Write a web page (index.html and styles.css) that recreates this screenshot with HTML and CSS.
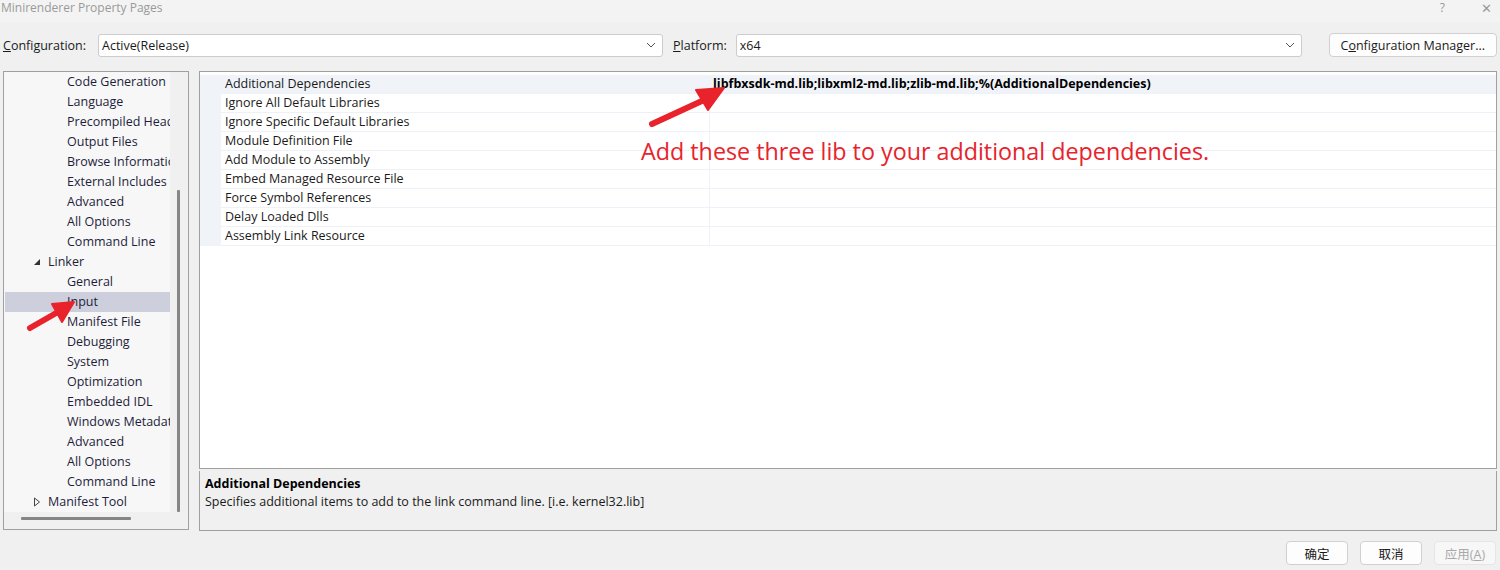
FILE: index.html
```html
<!DOCTYPE html>
<html>
<head>
<meta charset="utf-8">
<link rel="stylesheet" href="styles.css">
</head>
<body>
<div class="win">
  <div class="titlebar">
    <span class="title">Minirenderer Property Pages</span>
    <span class="tb-btns"><span class="help">?</span><span class="close">✕</span></span>
  </div>
  <div class="config-row">
    <span class="lbl"><u>C</u>onfiguration:</span>
    <div class="select sel-config"><span>Active(Release)</span><svg class="chev" width="10" height="6" viewBox="0 0 10 6"><path d="M1 1 L5 5 L9 1" fill="none" stroke="#555" stroke-width="1"/></svg></div>
    <span class="lbl lbl-plat"><u>P</u>latform:</span>
    <div class="select sel-plat"><span>x64</span><svg class="chev" width="10" height="6" viewBox="0 0 10 6"><path d="M1 1 L5 5 L9 1" fill="none" stroke="#555" stroke-width="1"/></svg></div>
    <button class="btn cfg-mgr">C<u>o</u>nfiguration Manager...</button>
  </div>
  <div class="main">
    <div class="tree-box">
      <div class="tree-inner">
        <div class="tree">
          <div class="ti l2">Code Generation</div>
          <div class="ti l2">Language</div>
          <div class="ti l2">Precompiled Headers</div>
          <div class="ti l2">Output Files</div>
          <div class="ti l2">Browse Information</div>
          <div class="ti l2">External Includes</div>
          <div class="ti l2">Advanced</div>
          <div class="ti l2">All Options</div>
          <div class="ti l2">Command Line</div>
          <div class="ti l1"><svg class="tw" width="8" height="8" viewBox="0 0 8 8"><path d="M7 1 L7 7 L1 7 Z" fill="#333"/></svg>Linker</div>
          <div class="ti l2">General</div>
          <div class="ti l2 sel">Input</div>
          <div class="ti l2">Manifest File</div>
          <div class="ti l2">Debugging</div>
          <div class="ti l2">System</div>
          <div class="ti l2">Optimization</div>
          <div class="ti l2">Embedded IDL</div>
          <div class="ti l2">Windows Metadata</div>
          <div class="ti l2">Advanced</div>
          <div class="ti l2">All Options</div>
          <div class="ti l2">Command Line</div>
          <div class="ti l1"><svg class="tw" width="8" height="10" viewBox="0 0 8 10"><path d="M1.5 1 L6.5 5 L1.5 9 Z" fill="none" stroke="#444" stroke-width="1"/></svg>Manifest Tool</div>
        </div>
        <div class="vscroll"><div class="vthumb"></div></div>
      </div>
      <div class="hscroll"><div class="hthumb"></div></div>
    </div>
    <div class="right">
      <div class="grid">
        <div class="row first"><div class="gut"></div><div class="name">Additional Dependencies</div><div class="val">libfbxsdk-md.lib;libxml2-md.lib;zlib-md.lib;%(AdditionalDependencies)</div></div>
        <div class="row"><div class="gut"></div><div class="name">Ignore All Default Libraries</div><div class="val"></div></div>
        <div class="row"><div class="gut"></div><div class="name">Ignore Specific Default Libraries</div><div class="val"></div></div>
        <div class="row"><div class="gut"></div><div class="name">Module Definition File</div><div class="val"></div></div>
        <div class="row"><div class="gut"></div><div class="name">Add Module to Assembly</div><div class="val"></div></div>
        <div class="row"><div class="gut"></div><div class="name">Embed Managed Resource File</div><div class="val"></div></div>
        <div class="row"><div class="gut"></div><div class="name">Force Symbol References</div><div class="val"></div></div>
        <div class="row"><div class="gut"></div><div class="name">Delay Loaded Dlls</div><div class="val"></div></div>
        <div class="row"><div class="gut"></div><div class="name">Assembly Link Resource</div><div class="val"></div></div>
        <div class="note">Add these three lib to your additional dependencies.</div>
      </div>
      <div class="desc">
        <div class="desc-title">Additional Dependencies</div>
        <div class="desc-text">Specifies additional items to add to the link command line. [i.e. kernel32.lib]</div>
      </div>
    </div>
  </div>
  <div class="footer">
    <button class="btn fbtn">确定</button>
    <button class="btn fbtn">取消</button>
    <button class="btn fbtn dis">应用(<u>A</u>)</button>
  </div>
  <svg class="arrow arrow1" width="100" height="60" viewBox="0 0 100 60">
    <path d="M8 48 L60 24" stroke="#e8232b" stroke-width="6" stroke-linecap="round"/>
    <path d="M80 12 L52 14 L64 34 Z" fill="#e8232b" stroke="#e8232b" stroke-width="2" stroke-linejoin="round"/>
  </svg>
  <svg class="arrow arrow2" width="60" height="40" viewBox="0 0 60 40">
    <path d="M6 34 L34 18" stroke="#e8232b" stroke-width="6" stroke-linecap="round"/>
    <path d="M50 8 L28 10 L38 28 Z" fill="#e8232b" stroke="#e8232b" stroke-width="2" stroke-linejoin="round"/>
  </svg>
</div>
</body>
</html>
```

FILE: styles.css
```css
* { box-sizing: border-box; }
html, body { margin: 0; padding: 0; }
body {
  width: 1500px; height: 570px; overflow: hidden;
  background: #f0f0f0;
  font-family: "Open Sans", "Noto Sans CJK SC", sans-serif;
  font-size: 12px;
  color: #1a1a1a;
}
.win { position: relative; width: 1500px; height: 570px; }
.titlebar {
  height: 22px; background: #f3f3f3;
  display: flex; justify-content: space-between; align-items: center;
}
.title { color: #9a9a9a; font-size: 12px; padding-left: 1px; margin-top: -7px; }
.tb-btns { display: flex; gap: 36px; color: #999; margin-top: -7px; padding-right: 8px; }
.help { font-size: 12px; }
.close { font-size: 13px; }
.config-row {
  display: flex; align-items: center;
  height: 24px; margin-top: 11px;
  padding-left: 3px;
}
.lbl { font-size: 12.5px; }
.select {
  height: 23px; background: #fff;
  border: 1px solid #ccc; border-radius: 3px;
  display: flex; align-items: center; justify-content: space-between;
  padding: 0 6px 0 3px; font-size: 12.5px;
}
.sel-config { width: 565px; margin-left: 12px; }
.lbl-plat { margin-left: 10px; }
.sel-plat { width: 566px; margin-left: 9px; }
.btn {
  font-family: "Open Sans", "Noto Sans CJK SC", sans-serif;
  background: #fdfdfd; border: 1px solid #d0d0d0; border-radius: 4px;
  font-size: 12.5px; color: #1a1a1a; padding: 0;
}
.cfg-mgr { margin-left: 27px; width: 168px; height: 24px; }
.main { display: flex; margin-top: 14px; padding-left: 3px; height: 460px; }
.tree-box {
  width: 186px; height: 459px; border: 1px solid #a0a0a0;
  display: flex; flex-direction: column;
}
.tree-inner { display: flex; height: 440px; }
.tree { width: 166px; background: #f7f7f7; overflow: hidden; padding-left: 1px; }
.ti { height: 20px; line-height: 20px; font-size: 12.5px; color: #1e1e3c; white-space: nowrap; }
.l2 { padding-left: 62px; }
.l1 { padding-left: 28px; display: flex; align-items: center; }
.tw { margin-right: 7px; }
.sel { background: #cdd0dc; }
.vscroll { width: 18px; position: relative; }
.vthumb { position: absolute; left: 7px; top: 118px; width: 3px; height: 322px; background: #858585; border-radius: 1px; }
.hscroll { height: 17px; position: relative; }
.hthumb { position: absolute; left: 17px; top: 5px; width: 110px; height: 3px; background: #858585; border-radius: 1px; }
.right { margin-left: 10px; width: 1298px; display: flex; flex-direction: column; }
.grid {
  position: relative;
  height: 398px; background: #fff; border: 1px solid #a0a0a0;
  padding-top: 3px;
}
.row { display: flex; height: 19px; }
.gut { width: 21px; background: #f0f4f9; }
.name {
  width: 489px; padding-left: 4px; line-height: 18px; font-size: 12.5px;
  border-bottom: 1px solid #eef2f8; border-right: 1px solid #eef2f8;
}
.val {
  flex: 1; padding-left: 3px; line-height: 18px; font-size: 12.5px; font-weight: 700; color: #000;
  border-bottom: 1px solid #eef2f8;
}
.row.first .name, .row.first .val { background: #f0f4f9; }
.note {
  position: absolute; left: 441px; top: 63px;
  color: #e8232b; font-size: 23.3px; font-family: "Open Sans", sans-serif;
  white-space: nowrap;
}
.desc {
  margin-top: 2px; height: 60px; border: 1px solid #a0a0a0; border-top: none;
  padding: 4px 5px; background: #f0f0f0;
}
.desc-title { font-weight: 700; font-size: 12.5px; line-height: 17px; color: #000; }
.desc-text { font-size: 12.5px; line-height: 19px; }
.footer { display: flex; justify-content: flex-end; gap: 12px; padding-right: 4px; margin-top: 10px; }
.fbtn { width: 62px; height: 24px; font-size: 12.5px; }
.fbtn.dis { color: #a8a8a8; background: #f7f7f7; border-color: #e5e5e5; }
.arrow { position: absolute; }
.arrow1 { left: 644px; top: 76px; }
.arrow2 { left: 24px; top: 294px; }
```
